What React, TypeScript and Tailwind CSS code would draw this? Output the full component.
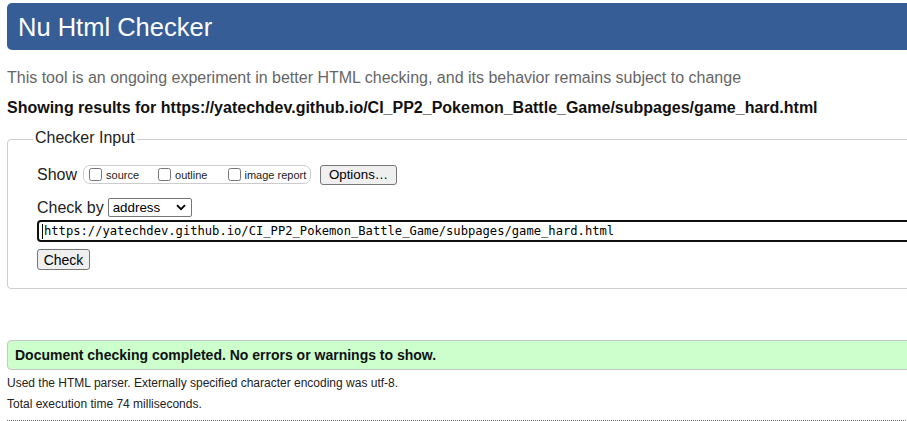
import React from "react";

const url = "https://yatechdev.github.io/CI_PP2_Pokemon_Battle_Game/subpages/game_hard.html";

function Box({ label, gap }: { label: string; gap: string }) {
  return (
    <label className={`flex items-center ${gap}`}>
      <input type="checkbox" className="m-0 w-[13px] h-[13px]" />
      <span className="text-[11px] leading-[13px] pt-[2px] text-[#222]">{label}</span>
    </label>
  );
}

export default function App() {
  return (
    <div className="w-[907px] h-[421px] overflow-hidden bg-white text-[#222] font-['Liberation_Sans',Arial,sans-serif]">
      <div className="w-[1000px] pl-[7px] pt-[3px]">
        <header className="h-[47px] rounded-[5px] bg-[#365d96] pl-[11px] flex items-center">
          <h1 className="text-[25.5px] leading-[30px] text-white pt-[1px]">Nu Html Checker</h1>
        </header>

        <p className="mt-[19px] text-[16px] leading-[18px] text-[#666]">
          This tool is an ongoing experiment in better HTML checking, and its behavior remains subject to change
        </p>
        <p className="mt-[12px] text-[16px] leading-[18px] font-bold text-[#111]">
          Showing results for {url}
        </p>

        <fieldset className="mt-[12px] border border-[#ccc] rounded-[4px] pl-[29px] pb-[18px] w-[960px]">
          <legend className="ml-[-4px] px-[2px] pb-[3px] text-[16px] leading-[18px] text-[#222]">Checker Input</legend>

          <div className="mt-[14px] h-[21px] flex items-center">
            <span className="text-[16px] leading-[18px]">Show</span>
            <div className="ml-[6px] h-[19px] w-[228px] border border-[#ccc] rounded-[7px] flex items-center pl-[5px]">
              <Box label="source" gap="gap-[4px]" />
              <div className="ml-[19px]">
                <Box label="outline" gap="gap-[4px]" />
              </div>
              <div className="ml-[21px]">
                <Box label="image report" gap="gap-[3px]" />
              </div>
            </div>
            <button className="ml-[9px] h-[20px] w-[77px] bg-[#efefef] border border-[#767676] rounded-[3px] text-[13.33px] leading-[16px] text-black">
              Options…
            </button>
          </div>

          <div className="mt-[13px] h-[19px] flex items-center">
            <span className="text-[16px] leading-[18px]">Check by</span>
            <div className="ml-[4px] h-[19px] w-[84px] border border-[#767676] rounded-[2px] flex items-center justify-between pl-[4px] pr-[5px] bg-white">
              <span className="text-[13.33px] leading-[16px] text-black">address</span>
              <svg width="10" height="7" viewBox="0 0 10 7" fill="none">
                <path d="M1 1.2 5 5.2 9 1.2" stroke="#000" strokeWidth="1.8" />
              </svg>
            </div>
          </div>

          <div className="mt-[3px] h-[22px] w-[900px] border-2 border-[#101010] rounded-[4px] flex items-center pl-[3px]">
            <span className="w-[1px] h-[15px] bg-black mr-[1px]" />
            <span className="font-['DejaVu_Sans_Mono',monospace] text-[12.15px] leading-[16px] text-black whitespace-nowrap">{url}</span>
          </div>

          <button className="mt-[7px] block h-[21px] w-[53px] bg-[#efefef] border border-[#767676] rounded-[3px] text-[14px] leading-[16px] text-black">
            Check
          </button>
        </fieldset>

        <div className="mt-[51px] h-[30px] w-[960px] border border-[#c8c8c8] rounded-[4px] bg-[#ccffcc] pl-[7px] flex items-center">
          <span className="text-[14px] leading-[28px] font-bold text-[#111]">Document checking completed. No errors or warnings to show.</span>
        </div>

        <p className="mt-[3px] text-[12px] leading-[21px] text-[#222]">
          Used the HTML parser. Externally specified character encoding was utf-8.
        </p>
        <p className="text-[12px] leading-[21px] text-[#222]">Total execution time 74 milliseconds.</p>
        <div className="mt-[5px] w-[899px] border-t border-dotted border-[#666]" />
      </div>
    </div>
  );
}
